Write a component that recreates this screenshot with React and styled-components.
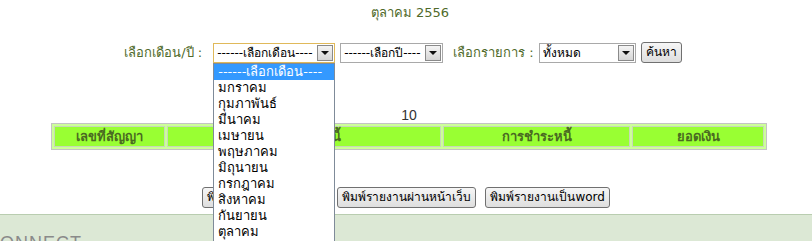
import React from "react";
import styled, { createGlobalStyle } from "styled-components";

const months = [
	"มกราคม",
	"กุมภาพันธ์",
	"มีนาคม",
	"เมษายน",
	"พฤษภาคม",
	"มิถุนายน",
	"กรกฎาคม",
	"สิงหาคม",
	"กันยายน",
	"ตุลาคม",
	"พฤศจิกายน",
	"ธันวาคม",
];

const columns = [
	{ label: "เลขที่สัญญา", width: 109 },
	{ label: "วันที่ชำระหนี้", width: 270 },
	{ label: "การชำระหนี้", width: 185 },
	{ label: "ยอดเงิน", width: 129 },
];

function SelectBox({ width, focused, children }) {
	return (
		<Select $width={width} $focused={focused}>
			<SelectText>{children}</SelectText>
			<Arrow />
		</Select>
	);
}

function App() {
	return (
		<>
			<GlobalStyle />
			<Page>
				<Title>ตุลาคม 2556</Title>
				<SearchRow>
					<Label $right={6}>เลือกเดือน/ปี :</Label>
					<SelectWrap>
						<SelectBox width={122} focused>
							------เลือกเดือน----
						</SelectBox>
						<DropList>
							<DropItem $active>------เลือกเดือน----</DropItem>
							{months.map((m) => (
								<DropItem key={m}>{m}</DropItem>
							))}
						</DropList>
					</SelectWrap>
					<SelectBox width={103}>------เลือกปี----</SelectBox>
					<Label $left={5}>เลือกรายการ :</Label>
					<SelectBox width={97}>ทั้งหมด</SelectBox>
					<Button>ค้นหา</Button>
				</SearchRow>
				<Count>10</Count>
				<Table>
					<thead>
						<tr>
							{columns.map((c) => (
								<HeadCell key={c.label} $width={c.width}>
									{c.label}
								</HeadCell>
							))}
						</tr>
					</thead>
				</Table>
				<ButtonRow>
					<Button>พิมพ์รายงานเป็นexcel</Button>
					<Button>พิมพ์รายงานผ่านหน้าเว็บ</Button>
					<Button>พิมพ์รายงานเป็นword</Button>
				</ButtonRow>
			</Page>
			<Footer>
				<FooterText>CONNECT</FooterText>
			</Footer>
		</>
	);
}

const GlobalStyle = createGlobalStyle`
	html, body {
		margin: 0;
		padding: 0;
		background: #fff;
		overflow: hidden;
	}
	body {
		font-family: Tahoma, "DejaVu Sans", "Noto Sans", sans-serif;
		font-size: 13px;
		color: #000;
	}
`;

const Page = styled.div`
	display: flex;
	flex-direction: column;
	align-items: center;
	padding-left: 6px;
`;

const Title = styled.div`
	margin-top: 5px;
	height: 16px;
	line-height: 16px;
	color: #4f6a2a;
	font-size: 13px;
	margin-left: 2px;
`;

const SearchRow = styled.div`
	margin-top: 21px;
	display: flex;
	align-items: center;
	gap: 5px;
	margin-left: -12px;
`;

const Label = styled.span`
	color: #4f6a2a;
	margin-left: ${(p) => p.$left || 0}px;
	margin-right: ${(p) => p.$right || 0}px;
	font-size: 13px;
`;

const SelectWrap = styled.div`
	position: relative;
`;

const Select = styled.div`
	box-sizing: border-box;
	width: ${(p) => p.$width}px;
	height: 20px;
	display: flex;
	align-items: center;
	border: 1px solid ${(p) => (p.$focused ? "#e0b95a" : "#a9a9a9")};
	background: #fff;
	padding: 0 1px 0 3px;
`;

const SelectText = styled.span`
	flex: 1;
	white-space: nowrap;
	overflow: hidden;
	font-size: 12px;
	line-height: 18px;
`;

const Arrow = styled.span`
	box-sizing: border-box;
	flex: none;
	width: 16px;
	height: 16px;
	border: 1px solid #8a8a8a;
	background: linear-gradient(#f4f4f4, #d6d6d6);
	display: flex;
	align-items: center;
	justify-content: center;
	&::after {
		content: "";
		border-left: 4px solid transparent;
		border-right: 4px solid transparent;
		border-top: 4px solid #111;
	}
`;

const DropList = styled.div`
	position: absolute;
	top: 100%;
	left: 0;
	box-sizing: border-box;
	width: 122px;
	background: #fff;
	border: 1px solid #7f8b99;
	z-index: 5;
`;

const DropItem = styled.div`
	height: 16px;
	line-height: 16px;
	padding-left: 4px;
	font-size: 13px;
	white-space: nowrap;
	overflow: hidden;
	background: ${(p) => (p.$active ? "#3399ff" : "#fff")};
	color: ${(p) => (p.$active ? "#fff" : "#000")};
`;

const Button = styled.button`
	box-sizing: border-box;
	height: 21px;
	padding: 0 4px;
	font-family: inherit;
	font-size: 12px;
	line-height: 17px;
	color: #000;
	border: 1px solid #707070;
	border-radius: 3px;
	background: linear-gradient(#f6f6f6, #dedede);
	white-space: nowrap;
`;

const Count = styled.div`
	margin-top: 45px;
	height: 15px;
	line-height: 15px;
	font-family: "Liberation Sans", Arial, sans-serif;
	font-size: 14px;
	color: #333;
`;

const Table = styled.table`
	border: 1px solid #c4c4c4;
	background: #ccff99;
	border-spacing: 2px;
	width: 716px;
	box-sizing: border-box;
`;

const HeadCell = styled.th`
	width: ${(p) => p.$width}px;
	height: 19px;
	line-height: 17px;
	padding: 0;
	background: #99ff33;
	border: 1px solid #c8d8b8;
	color: #4a6a22;
	font-size: 13px;
	font-weight: bold;
	text-align: center;
`;

const ButtonRow = styled.div`
	margin-top: 37px;
	display: flex;
	gap: 9px;
	margin-left: -6px;
`;

const Footer = styled.div`
	margin-top: 6px;
	height: 40px;
	background: #dce8d5;
	border-top: 1px solid #b9cdb0;
	overflow: hidden;
`;

const FooterText = styled.div`
	margin-top: 18px;
	margin-left: -14px;
	font-family: "Liberation Sans", Arial, sans-serif;
	font-size: 18px;
	line-height: 20px;
	letter-spacing: 1px;
	color: #8a8a8a;
`;

export default App;
